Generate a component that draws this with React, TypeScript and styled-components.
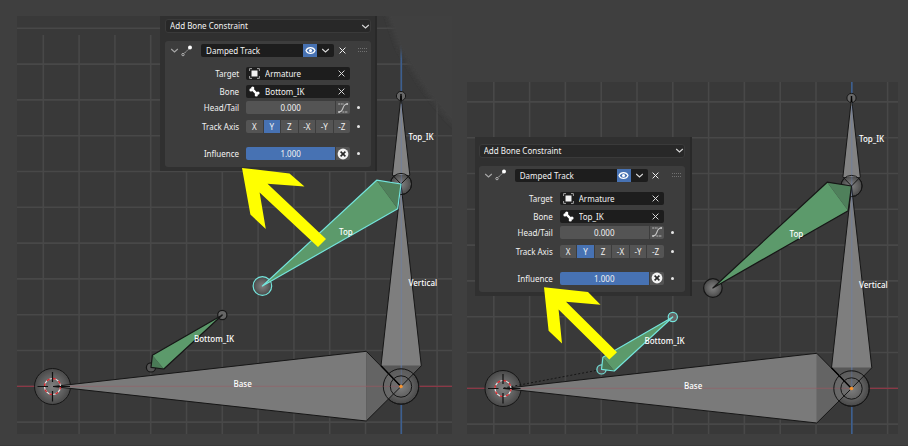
import React, { useId, useState } from "react";
import styled, { createGlobalStyle } from "styled-components";

const GlobalStyle = createGlobalStyle`
  * { box-sizing: border-box; }
  body {
    margin: 0;
    background: #3f3f3f;
    font-family: "Noto Sans", "Open Sans", sans-serif;
  }
  button, input, select { font: inherit; color: inherit; }
`;

const SELECT = "#74e4dc";
const INK = "#161616";

const Page = styled.main`
  display: flex;
  align-items: flex-end;
  gap: 15px;
  padding: 16px 10px 11px 17px;
  border-bottom: 1px solid #393939;
`;

const Viewport = styled.section<{ $w: number; $h: number }>`
  position: relative;
  flex: ${(p) => p.$w} 1 0;
  min-width: 0;
  aspect-ratio: ${(p) => p.$w} / ${(p) => p.$h};
  background: #393939;
  overflow: hidden;
`;

const Canvas = styled.svg`
  display: block;
  width: 100%;
  height: 100%;
`;

const Overlay = styled(Canvas)`
  position: absolute;
  inset: 0;
  pointer-events: none;
`;

const BoneLabel = styled.text`
  fill: #fff;
  font-size: 8px;
  font-weight: 500;
`;

const Panel = styled.form<{ $left: string; $top: string; $pad: string }>`
  position: absolute;
  left: ${(p) => p.$left};
  top: ${(p) => p.$top};
  width: 217px;
  padding: ${(p) => p.$pad};
  background: #303030;
  border-right: 2px solid #292929;
  color: #f2f2f2;
  font-size: 8px;
  line-height: 13px;
`;

const AddSelect = styled.div`
  display: grid;
  align-items: center;
  height: 14px;
  border: 1px solid #3a3a3a;
  border-radius: 3px;
  background: #282828;
  > * { grid-area: 1 / 1; }
  > svg { justify-self: end; pointer-events: none; }
`;

const Select = styled.select`
  appearance: none;
  width: 100%;
  height: 12px;
  padding: 0 4px;
  border: 0;
  background: transparent;
  line-height: 12px;
  outline: none;
`;

const Card = styled.div`
  margin-top: 8px;
  padding: 3px 4px 7px 5px;
  border-radius: 3px;
  background: #3d3d3d;
`;

const Header = styled.div`
  display: flex;
  align-items: center;
  height: 13px;
  margin-bottom: 10px;
`;

const IconButton = styled.button`
  display: grid;
  place-items: center;
  flex: none;
  width: 14px;
  height: 13px;
  padding: 0;
  border: 0;
  background: transparent;
`;

const CollapseButton = styled(IconButton)`
  width: 11px;
  justify-items: start;
`;

const ClearButton = styled(IconButton)`
  width: 17px;
`;

const EyeButton = styled(IconButton)`
  background: #4772b3;
`;

const NameGroup = styled.div`
  display: flex;
  flex: 1;
  min-width: 0;
  margin: 0 1px 0 8px;
  border-radius: 2px;
  background: #1d1d1d;
  overflow: hidden;
`;

const TextInput = styled.input`
  flex: 1;
  min-width: 0;
  width: 0;
  height: 13px;
  padding: 0 5px;
  border: 0;
  background: transparent;
  outline: none;
`;

const Grip = styled.span`
  display: grid;
  margin-left: 9px;
`;

const Row = styled.div<{ $gap: number }>`
  display: grid;
  grid-template-columns: 69px 104px 1fr;
  column-gap: 7px;
  align-items: center;
  height: 13px;
  margin-top: ${(p) => p.$gap}px;
`;

const Label = styled.label`
  text-align: right;
  white-space: nowrap;
`;

const Field = styled.div`
  display: flex;
  align-items: center;
  height: 13px;
  padding-left: 3px;
  border-radius: 2px;
  background: #1d1d1d;
  overflow: hidden;
`;

const Split = styled.div`
  display: flex;
  gap: 1px;
  height: 13px;
  border-radius: 2px;
  overflow: hidden;
`;

const NumberInput = styled(TextInput)<{ $filled?: boolean }>`
  text-align: center;
  background: ${(p) => (p.$filled ? "#4772b3" : "#545454")};
`;

const CurveButton = styled(IconButton)`
  background: #545454;
`;

const AxisButton = styled.button<{ $on: boolean }>`
  flex: 1;
  padding: 0;
  border: 0;
  background: ${(p) => (p.$on ? "#4772b3" : "#545454")};
  line-height: 13px;
`;

const Dot = styled.span`
  width: 3px;
  height: 3px;
  border-radius: 50%;
  background: #e6e6e6;
`;

const Chevron = ({ color = "#d8d8d8" }: { color?: string }) => (
  <svg width="9" height="9" viewBox="0 0 9 9" fill="none" stroke={color} strokeWidth="1.1">
    <path d="M1.2 3 4.5 6 7.8 3" />
  </svg>
);

const Cross = ({ color = "#d8d8d8" }: { color?: string }) => (
  <svg width="9" height="9" viewBox="0 0 9 9" fill="none" stroke={color} strokeWidth="1">
    <path d="M1.6 1.6 7.4 7.4M7.4 1.6 1.6 7.4" />
  </svg>
);

const TrackIcon = () => (
  <svg width="12" height="12" viewBox="0 0 12 12">
    <circle cx="2" cy="9.6" r="1.2" fill="none" stroke="#bdbdbd" strokeWidth=".9" />
    <path d="M3.4 8.2 7.8 3.8" stroke="#c8c8c8" strokeWidth="1" strokeDasharray="1.4 1" />
    <circle cx="9" cy="2.4" r="2" fill="#fff" />
  </svg>
);

const EyeIcon = () => (
  <svg width="11" height="9" viewBox="0 0 11 9">
    <path d="M1 4.5C2.6 .6 8.4 .6 10 4.5 8.4 8.4 2.6 8.4 1 4.5Z" fill="none" stroke="#fff" strokeWidth="1.2" />
    <circle cx="5.5" cy="4.5" r="1.5" fill="#fff" />
  </svg>
);

const ObjectIcon = () => (
  <svg width="11" height="11" viewBox="0 0 11 11">
    <rect x="2.5" y="2.5" width="6" height="6" fill="#f2f2f2" />
    <path
      d="M.6 3V.6H3M8 .6h2.4V3M10.4 8v2.4H8M3 10.4H.6V8"
      fill="none"
      stroke="#c4c4c4"
      strokeWidth=".8"
    />
  </svg>
);

const BoneIcon = () => (
  <svg width="11" height="11" viewBox="0 0 11 11" fill="#fff">
    <path d="M3.2 3.2 7.8 7.8" stroke="#fff" strokeWidth="2.4" />
    <circle cx="3.7" cy="2" r="1.6" />
    <circle cx="2" cy="3.9" r="1.6" />
    <circle cx="9" cy="7.1" r="1.6" />
    <circle cx="7.3" cy="9" r="1.6" />
  </svg>
);

const CurveIcon = () => (
  <svg width="12" height="12" viewBox="0 0 12 12" fill="none" stroke="#c4c4c4">
    <path d="M2 10C7.6 9.6 4.4 2.4 10 2" strokeWidth="1.1" />
    <path d="M1.2 2H7M5.4 10H11" strokeWidth=".9" strokeDasharray="2 .6" />
    <circle cx="2" cy="10" r="1" fill="#c4c4c4" stroke="none" />
    <circle cx="10.2" cy="2" r="1" fill="#c4c4c4" stroke="none" />
  </svg>
);

const ClearIcon = () => (
  <svg width="12" height="12" viewBox="0 0 12 12">
    <circle cx="6" cy="6" r="5.4" fill="#f2f2f2" />
    <path d="M3.6 3.6 8.4 8.4M8.4 3.6 3.6 8.4" stroke="#2a2a2a" strokeWidth="1.6" />
  </svg>
);

const GripIcon = () => (
  <svg width="9" height="5" viewBox="0 0 9 5" fill="#707070">
    {[0, 2, 4, 6, 8].map((x) => (
      <React.Fragment key={x}>
        <rect x={x} y="0" width="1" height="1" />
        <rect x={x} y="3" width="1" height="1" />
      </React.Fragment>
    ))}
  </svg>
);

const AXES = ["X", "Y", "Z", "-X", "-Y", "-Z"];

type PanelProps = { bone: string; left: string; top: string; pad: string };

function ConstraintPanel({ bone, left, top, pad }: PanelProps) {
  const id = useId();
  const [axis, setAxis] = useState("Y");
  const [target, setTarget] = useState("Armature");
  const [boneName, setBoneName] = useState(bone);
  return (
    <Panel $left={left} $top={top} $pad={pad} onSubmit={(e) => e.preventDefault()}>
      <AddSelect>
        <Select aria-label="Add Bone Constraint" defaultValue="add">
          <option value="add">Add Bone Constraint</option>
        </Select>
        <Chevron />
      </AddSelect>
      <Card>
        <Header>
          <CollapseButton type="button" aria-label="Collapse">
            <Chevron color="#a8a8a8" />
          </CollapseButton>
          <TrackIcon />
          <NameGroup>
            <TextInput aria-label="Constraint name" defaultValue="Damped Track" />
            <EyeButton type="button" aria-label="Show in viewport" aria-pressed="true">
              <EyeIcon />
            </EyeButton>
            <ClearButton type="button" aria-label="More options">
              <Chevron />
            </ClearButton>
          </NameGroup>
          <IconButton type="button" aria-label="Remove constraint">
            <Cross color="#f0f0f0" />
          </IconButton>
          <Grip>
            <GripIcon />
          </Grip>
        </Header>
        <Row $gap={0}>
          <Label htmlFor={id + "target"}>Target</Label>
          <Field>
            <ObjectIcon />
            <TextInput id={id + "target"} value={target} onChange={(e) => setTarget(e.target.value)} />
            <ClearButton type="button" aria-label="Clear target" onClick={() => setTarget("")}>
              <Cross />
            </ClearButton>
          </Field>
        </Row>
        <Row $gap={5}>
          <Label htmlFor={id + "bone"}>Bone</Label>
          <Field>
            <BoneIcon />
            <TextInput id={id + "bone"} value={boneName} onChange={(e) => setBoneName(e.target.value)} />
            <ClearButton type="button" aria-label="Clear bone" onClick={() => setBoneName("")}>
              <Cross />
            </ClearButton>
          </Field>
        </Row>
        <Row $gap={3}>
          <Label htmlFor={id + "head"}>Head/Tail</Label>
          <Split>
            <NumberInput id={id + "head"} defaultValue="0.000" />
            <CurveButton type="button" aria-label="Use B-bone shape">
              <CurveIcon />
            </CurveButton>
          </Split>
          <Dot />
        </Row>
        <Row $gap={6}>
          <Label as="span" id={id + "axis"}>
            Track Axis
          </Label>
          <Split role="group" aria-labelledby={id + "axis"}>
            {AXES.map((a) => (
              <AxisButton
                key={a}
                type="button"
                $on={a === axis}
                aria-pressed={a === axis}
                onClick={() => setAxis(a)}
              >
                {a}
              </AxisButton>
            ))}
          </Split>
          <Dot />
        </Row>
        <Row $gap={14}>
          <Label htmlFor={id + "influence"}>Influence</Label>
          <Split>
            <NumberInput id={id + "influence"} $filled defaultValue="1.000" />
            <CurveButton type="button" aria-label="Disable constraint">
              <ClearIcon />
            </CurveButton>
          </Split>
          <Dot />
        </Row>
      </Card>
    </Panel>
  );
}

/* Grid step of the 3D view and the armature origin, in scene units. */
const STEP = 35.8;
const OX = 401.3;
const OY = 386.3;
const COLUMNS = Array.from({ length: 12 }, (_, i) => OX + (i - 10) * STEP);
const ROWS = Array.from({ length: 12 }, (_, i) => OY + (i - 10) * STEP);

type SceneProps = { viewBox: string; selected: "Top" | "Bottom_IK"; gridTop: number };

function Scene({ viewBox, selected, gridTop }: SceneProps) {
  const uid = useId();
  const ball = `url(#${uid}ball)`;
  const topInk = selected === "Top" ? SELECT : INK;
  const lowInk = selected === "Bottom_IK" ? SELECT : INK;
  return (
    <Canvas viewBox={viewBox} role="img" aria-label="Armature in the 3D view">
      <defs>
        <radialGradient id={uid + "ball"}>
          <stop offset="0" stopColor="#808080" />
          <stop offset=".6" stopColor="#616161" />
          <stop offset="1" stopColor="#484848" />
        </radialGradient>
      </defs>
      <g stroke="#484848" strokeWidth="1.6">
        {COLUMNS.map((x) => (
          <path key={x} d={`M${x} ${gridTop}V440`} />
        ))}
        {ROWS.map((y) => (
          <path key={y} d={`M10 ${y}H460`} />
        ))}
      </g>
      <path d={`M10 ${OY}H460`} stroke="#8c3846" strokeWidth="1.2" />
      <path d={`M${OX} 45V440`} stroke="#3c5f90" strokeWidth="1.6" />

      <g stroke={INK} strokeWidth="1">
        <circle cx="52.5" cy="386.5" r="18" fill={ball} />
        <circle cx="401" cy="386.5" r="17.7" fill={ball} />
        <circle cx="401" cy="184" r="10.6" fill={ball} />
        <circle cx="401" cy="96" r="4.6" fill="#666" />
      </g>
      {selected === "Bottom_IK" && (
        <path d="M53 386 151 367.5" stroke={INK} strokeDasharray="2 2" fill="none" />
      )}

      <g strokeLinejoin="round">
        <path d="M53 386.5 366.3 351.3V421Z" fill="#7a7a7a" />
        <path d="M366.3 351.3 401 386.5 366.3 421Z" fill="#6c6c6c" fillOpacity=".85" />
        <path d="M53 386.5 366.3 351.3 401 386.5 366.3 421Z" fill="none" stroke={INK} />
        <path d="M401 184 381 365.8H421.3Z" fill="#7e7e7e" />
        <path d="M381 365.8H421.3L401 386.5Z" fill="#646464" fillOpacity=".7" />
        <path d="M401 184 381 365.8 401 386.5 421.3 365.8Z" fill="none" stroke={INK} />
        <path d="M401 96 392.4 175H409.8Z" fill="#828282" />
        <path d="M401 96 392.4 175 401 184 409.8 175Z" fill="none" stroke={INK} />
      </g>
      <path d="M381 365.8 401 386.5" stroke="#000" strokeWidth="1.3" />
      <path d={`M70 ${OY}H400`} stroke="#b04a58" strokeOpacity=".35" />
      <path d={`M${OX} 104V384`} stroke="#5f7fc0" strokeOpacity=".4" />

      <g fill="none" stroke={INK}>
        <circle cx="401" cy="386.5" r="17.7" />
        <circle cx="401" cy="386.5" r="10.7" />
        <circle cx="401" cy="184" r="10.6" />
      </g>
      <path d="M401 94V100" stroke="#000" strokeWidth="1.4" />
      <circle cx="401" cy="386.5" r="1.8" fill="#f59331" />

      <circle cx="262.4" cy="286" r="9.3" fill={ball} stroke={topInk} strokeWidth="1.2" />
      <path d="M262.4 286 376.7 180.2 397.7 208.7Z" fill="#5c9a6b" />
      <path d="M376.7 180.2 401 184 397.7 208.7Z" fill="#4f805b" />
      <path
        d="M262.4 286 376.7 180.2 401 184 397.7 208.7Z"
        fill="none"
        stroke={topInk}
        strokeWidth="1.2"
        strokeLinejoin="round"
      />

      <g stroke={lowInk} strokeWidth="1.2">
        <circle cx="222.3" cy="315" r="4.6" fill="#666" />
        <circle cx="151" cy="367.4" r="4.6" fill="#555" />
      </g>
      <path d="M222.3 315 152.4 355.3 163.8 369Z" fill="#5c9a6b" />
      <path d="M152.4 355.3 151 367.4 163.8 369Z" fill="#4a7a56" />
      <path
        d="M222.3 315 152.4 355.3 151 367.4 163.8 369Z"
        fill="none"
        stroke={lowInk}
        strokeWidth="1.2"
        strokeLinejoin="round"
      />

      <g fill="none">
        <circle cx="52.5" cy="386.5" r="8" stroke="#e8e8e8" strokeWidth="1.2" />
        <circle cx="52.5" cy="386.5" r="8" stroke="#d8262c" strokeWidth="1.3" strokeDasharray="3.14 3.14" />
        <path
          d="M52.5 372V382M52.5 391V401.5M37.5 386.5H48M53 386.5H70"
          stroke="#101010"
          strokeWidth="1.2"
        />
      </g>

      <BoneLabel x="408.5" y="140">Top_IK</BoneLabel>
      <BoneLabel x="408.5" y="286">Vertical</BoneLabel>
      <BoneLabel x="339" y="235">Top</BoneLabel>
      <BoneLabel x="194" y="342">Bottom_IK</BoneLabel>
      <BoneLabel x="233.5" y="387">Base</BoneLabel>
    </Canvas>
  );
}

export default function App() {
  return (
    <>
      <GlobalStyle />
      <Page>
        <Viewport $w={435} $h={418}>
          <Scene viewBox="17 16 435 418" selected="Top" gridTop={35} />
          <Overlay viewBox="17 16 435 418" aria-hidden="true">
            <defs>
              <filter id="soft" x="-20%" y="-20%" width="140%" height="140%">
                <feGaussianBlur stdDeviation="2" />
              </filter>
            </defs>
            <path
              d="M383 6C390 22 393 34 398 48 408 64 416 78 426 92 436 106 446 118 462 134V6Z"
              fill="#3f3f3f"
              filter="url(#soft)"
            />
          </Overlay>
          <ConstraintPanel bone="Bottom_IK" left="32.9%" top="0" pad="3px 4px 4px 5px" />
          <Overlay viewBox="17 16 435 418" aria-hidden="true">
            <path
              d="M242 168 289.5 173.4 304.5 186.6 267.5 183.7 326 239 318 247 259.6 192.5 265.8 229 250.4 214.5Z"
              fill="#ff0"
            />
          </Overlay>
        </Viewport>
        <Viewport $w={431} $h={352}>
          <Scene viewBox="16.5 80 431 352" selected="Bottom_IK" gridTop={0} />
          <ConstraintPanel bone="Top_IK" left="1.8%" top="15.6%" pad="7px 5px 4px 4px" />
          <Overlay viewBox="467 82 431 352" aria-hidden="true">
            <path
              d="M544 287.3 588 292 600.5 304.8 566 301.8 617 352.3 609.3 359.5 558.6 309.4 562 343.5 548.6 330.8Z"
              fill="#ff0"
            />
          </Overlay>
        </Viewport>
      </Page>
    </>
  );
}
